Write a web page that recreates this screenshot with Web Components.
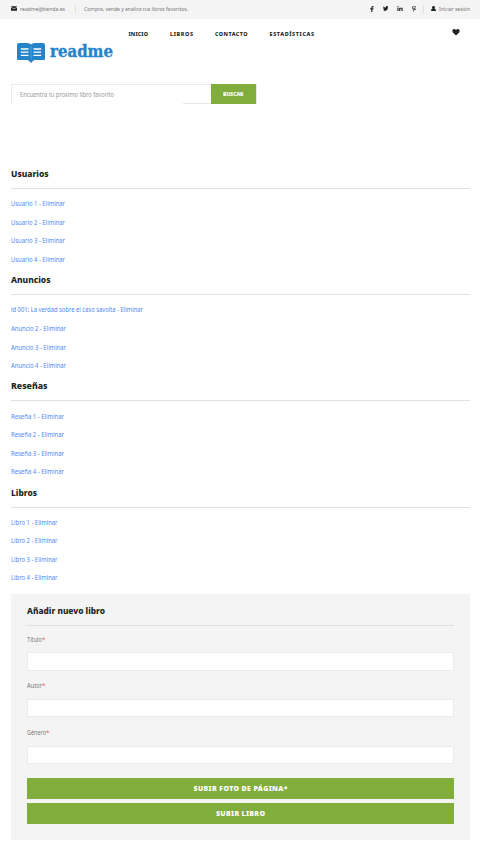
<!DOCTYPE html>
<html lang="es"><head><meta charset="utf-8"><title>readme</title>
<style>
html,body{margin:0;background:#fff}
body{font-family:"Noto Sans","Open Sans",sans-serif;color:#777;width:480px;height:849px;overflow:hidden}
</style></head><body>
<readme-page></readme-page>
<script>
const define=(name,html,init)=>customElements.define(name,class extends HTMLElement{
  connectedCallback(){
    if(this.shadowRoot)return;
    const t=document.createElement('template');
    t.innerHTML=typeof html==='function'?html(this):html;
    this.attachShadow({mode:'open'}).append(t.content.cloneNode(true));
    if(init)init(this);
  }
});
// Text run condensed to a given width; with "track" it is spaced out instead.
define('fit-text','<style>:host{display:inline-block;white-space:nowrap}span{display:inline-block;transform-origin:0 50%}</style><span><slot></slot></span>',el=>{
  const s=el.shadowRoot.querySelector('span'),w=+el.getAttribute('w');
  el.style.width=w+'px';
  const n=el.textContent.length,m=s.getBoundingClientRect().width;
  if(el.hasAttribute('track'))s.style.letterSpacing=((w-m)/(n-1)).toFixed(3)+'px';
  else s.style.transform=`scaleX(${(w/m).toFixed(4)})`;
});
const icons={
 mail:['0 0 16 12','<path d="M1 0h14q1 0 1 1L8 6.500 0 1q0-1 1-1zM0 3l8 5.300L16 3v8q0 1-1 1H1q-1 0-1-1z"/>'],
 fb:['0 0 10 16','<path d="M9 0v3H7.500Q6 3 6 4.300V6h3l-.4 3H6v7H3V9H.5V6H3V4Q3 0 7 0z"/>'],
 tw:['0 0 16 14','<path d="M16 2l-1.700 1.700Q14.300 14 5 14q-3 0-5-1.400 2.600.1 4.600-1.400-2.300-.2-3-2.300h1.400Q.5 8 .6 5.500l1.400.4Q-.2 3.900 1.200 1.200q2.800 3.200 6.700 3.400Q7.300 0 11.200 0q1.400 0 2.400 1l2-.8-1.300 1.900z"/>'],
 li:['0 0 16 15','<path d="M0 5h3.400v10H0zM1.700 0a1.800 1.800 0 1 1 0 3.600 1.800 1.800 0 0 1 0-3.600zM5.500 5h3.300v1.500q1-1.800 3.300-1.800 3.900 0 3.900 4.500V15h-3.400V9.800q0-2.300-1.700-2.300-2 0-2 2.400V15H5.500z"/>'],
 pin:['0 0 12 16','<path d="M6.300 0Q12 .2 12 5.200c0 3-1.700 5.800-4.400 5.800q-1.400 0-2-1L4.300 14 3 16q-.5-3 1-7.500-.8-4 1.900-4.300 2 0 1.200 2.800-.7 2.600.9 2.600 2.200-.3 2.200-4.300 0-3.600-4-3.700-4.400.1-4.400 4.100l.7 2.200-.4 1.200Q0 8.400 0 5.600 0 .3 6.300 0z"/>'],
 user:['0 0 14 16','<path d="M7 0a4 4 0 0 1 2.500 7.300L11 8q3 1 3 5 0 3-2 3H2q-2 0-2-3 0-4 3-5l1.500-.7A4 4 0 0 1 7 0z"/>'],
 heart:['0 0 16 14','<path d="M8 14L1.300 7.500Q0 6 0 4 0 0 4.300 0 6.500 0 8 2q1.500-2 3.700-2Q16 0 16 4q0 2-1.300 3.500z"/>']
};
define('ui-icon',el=>{const [v,p]=icons[el.getAttribute('name')];
 return `<style>:host{display:block;flex:none}svg{display:block;width:100%;height:100%;fill:#222}</style><svg viewBox="${v}">${p}</svg>`});

define('top-bar',`<style>
:host{display:flex;align-items:center;height:19px;padding:0 10px 2px 11px;box-sizing:border-box;background:#f4f4f4;font-size:5.900px;line-height:8px;color:#777}
i{width:1px;height:8px;background:#ddd}
.end{margin-left:auto;display:flex;align-items:center}
</style>
<ui-icon name="mail" style="width:6px;height:5px;margin-right:3px"></ui-icon><fit-text w="45">readme@tienda.es</fit-text>
<i style="margin:0 8px 0 10px"></i><fit-text w="104">Compra, vende y analiza tus libros favoritos.</fit-text>
<div class="end"><ui-icon name="fb" style="width:4px;height:6px;margin-right:9px"></ui-icon>
<ui-icon name="tw" style="width:5.500px;height:5px;margin-right:9px"></ui-icon>
<ui-icon name="li" style="width:6px;height:5px;margin-right:8.500px"></ui-icon>
<ui-icon name="pin" style="width:4.500px;height:6px"></ui-icon>
<i style="margin:0 7px"></i><ui-icon name="user" style="width:5px;height:5.500px;margin-right:3px"></ui-icon><fit-text w="31">Iniciar sesión</fit-text></div>`);

define('brand-logo',`<style>
:host{display:flex;width:97px;height:22px}
svg{display:block;flex:none;margin-right:4.500px}
fit-text{font:bold 17px/22px "DejaVu Serif",serif;color:#2484c9;-webkit-text-stroke:.4px #2484c9;margin-top:-2.500px}
</style>
<svg width="28" height="22" viewBox="0 0 28 22" fill="#2484c9">
<path d="M2 1H10Q13 1 14 2.600 15 1 18 1H26Q28 1 28 3V17Q28 18 27 18H18Q16.500 18 16 19L14 21 12 19Q11.500 18 10 18H1Q0 18 0 17V3Q0 1 2 1Z"/>
<path d="M14 3.500V17" stroke="#66abd9" stroke-width=".7"/>
<path d="M3.800 7H11.500M3.800 10.200H11.500M3.800 13.400H11.500M16.500 7H24.200M16.500 10.200H24.200M16.500 13.400H24.200" stroke="#fff" stroke-width="1.300" fill="none"/></svg><fit-text w="63">readme</fit-text>`);

define('main-nav',`<style>
:host{display:flex;height:65px;box-sizing:border-box;padding:0 20px 0 17px;align-items:flex-start}
brand-logo{margin:23px 14.500px 0 0}
nav{display:flex;gap:22px;padding-top:11px;font-size:5.400px;line-height:8px;font-weight:800;color:#222}
ui-icon{width:8px;height:6.500px;margin:10px 0 0 auto}
</style><brand-logo></brand-logo><nav><fit-text track w="19.500">INICIO</fit-text><fit-text track w="23">LIBROS</fit-text><fit-text track w="32.500">CONTACTO</fit-text><fit-text track w="44.500">ESTADÍSTICAS</fit-text></nav><ui-icon name="heart"></ui-icon>`);

define('search-box',`<style>
:host{display:flex;width:246px;height:20px;margin-left:11px;box-sizing:border-box}
.field{flex:1;display:flex;align-items:center;padding-left:8px;border:solid #ebebeb;border-width:1px 0 0 1px;font-size:6.200px;line-height:8px;color:#999;
background:linear-gradient(#e8e8e8,#e8e8e8) right bottom/28px 1px no-repeat}
b{width:45px;display:flex;align-items:center;justify-content:center;background:#80ad3b;color:#fff;font-size:5.600px;line-height:8px;font-weight:900;border-right:1px solid #e8e8e8}
</style><div class="field"><fit-text w="94">Encuentra tu proximo libro favorito</fit-text></div><b><fit-text w="20.500">BUSCAR</fit-text></b>`);

define('list-section',el=>`<style>
:host{display:block;height:106.200px;margin:0 10px 0 11px}
h2{margin:0;height:18px;font-size:9.400px;line-height:17.500px;font-weight:800;color:#222}
hr{margin:5px 0 6px;border:0;height:1px;background:#e1e1e1}
a{display:flex;align-items:center;height:18.550px;font-size:6.200px;line-height:10px;color:#4c88fa}
</style><h2><fit-text w="${el.getAttribute('tw')}">${el.getAttribute('title-text')}</fit-text></h2><hr>
${el.getAttribute('items').split('|').map(s=>{const[t,w]=s.split('~');return `<a><fit-text w="${w}">${t} - Eliminar</fit-text></a>`}).join('')}`);

define('form-field',`<style>
:host{display:block;height:46.750px}
label{display:block;height:10px;line-height:11px;font-size:6.200px;color:#777}
label i{color:#e66;font-style:normal}
.in{height:18.500px;box-sizing:border-box;margin-top:8.500px;background:#fff;border:1px solid #ebebeb;border-radius:1px}
</style><label><slot></slot><i>*</i></label><div class="in"></div>`);

define('wide-button',`<style>:host{display:flex;align-items:center;justify-content:center;height:21px;padding-top:1px;box-sizing:border-box;background:#80ad3b;color:#fff;font-size:7px;line-height:10px;font-weight:900}</style><slot></slot>`);

define('book-form',`<style>
:host{display:block;height:246px;box-sizing:border-box;margin:0 10px 0 11px;padding:8px 16px 0;background:#f4f4f4}
h2{margin:0;height:18px;font-size:8.900px;line-height:18px;font-weight:800;color:#222}
hr{margin:5px 0 7.700px;border:0;height:1px;background:#e0e0e0}
wide-button{margin-bottom:4px}
.buttons{padding-top:4.050px}
</style><h2><fit-text w="78">Añadir nuevo libro</fit-text></h2><hr>
<form-field><fit-text w="15">Título</fit-text></form-field><form-field><fit-text w="15">Autor</fit-text></form-field><form-field><fit-text w="19">Género</fit-text></form-field>
<div class="buttons"><wide-button><fit-text track w="94">SUBIR FOTO DE PÁGINA*</fit-text></wide-button><wide-button><fit-text track w="49">SUBIR LIBRO</fit-text></wide-button></div>`);

define('readme-page',`<style>:host{display:block}.lists{padding-top:61px;height:490px;box-sizing:border-box}</style>
<top-bar></top-bar><main-nav></main-nav><search-box></search-box>
<div class="lists">
<list-section title-text="Usuarios" tw="37.500" items="Usuario 1~54|Usuario 2~54|Usuario 3~54|Usuario 4~54"></list-section>
<list-section title-text="Anuncios" tw="39.500" items="id 001: La verdad sobre el caso savolta~132|Anuncio 2~55|Anuncio 3~55|Anuncio 4~55"></list-section>
<list-section title-text="Reseñas" tw="36.500" items="Reseña 1~53|Reseña 2~53|Reseña 3~53|Reseña 4~53"></list-section>
<list-section title-text="Libros" tw="26" items="Libro 1~46.500|Libro 2~46.500|Libro 3~46.500|Libro 4~46.500"></list-section>
</div><book-form></book-form>`);
</script>
</body></html>
